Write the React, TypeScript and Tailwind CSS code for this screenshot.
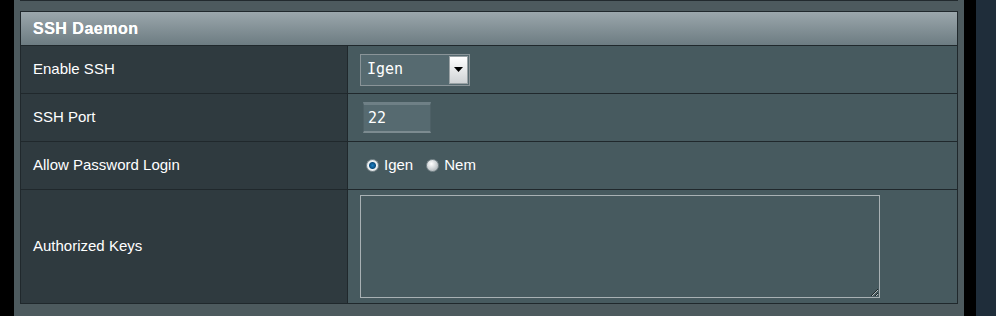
import { useState } from 'react'

const labelFont = { fontFamily: '"Liberation Sans", Arial, sans-serif' }

function Radio({ checked }: { checked: boolean }) {
  return (
    <span
      className={
        'inline-block w-[13px] h-[13px] rounded-full border border-[#7d8a8f] ' +
        (checked
          ? 'bg-[radial-gradient(circle,#1b7fc4_0,#0c4f80_3px,#f2f4f5_4px,#d5dadc_6px)]'
          : 'bg-[radial-gradient(circle_at_40%_35%,#ffffff_0,#d8dcde_4px,#b9bfc2_7px)]')
      }
    />
  )
}

export default function App() {
  const [pwLogin, setPwLogin] = useState(true)

  return (
    <div className="flex w-[996px] h-[316px] overflow-hidden" style={labelFont}>
      <div className="w-[14px] bg-black" />
      <div className="w-[950px] bg-[#4d5a5e] px-[6px]">
        <div className="h-[1px] bg-[#222a2e]" />
        <div className="mt-[10px] border border-[#20282c]">
          <div className="h-[34px] flex items-center px-[12px] bg-gradient-to-b from-[#9ba7ac] to-[#6d7c82] border-b border-[#20282c]">
            <span className="text-white font-bold text-[16px] tracking-[0.5px] [text-shadow:0_0_0.6px_#fff]">SSH Daemon</span>
          </div>

          <div className="grid grid-cols-[327px_1fr] h-[48px] border-b border-[#20282c]">
            <div className="bg-[#2f3a3f] border-r border-[#20282c] flex items-center px-[12px] text-white text-[15px]">Enable SSH</div>
            <div className="bg-[#475a5f] flex items-center px-[12px]">
              <div className="flex items-center w-[110px] h-[32px] border border-[#8a9498] bg-[#566a70]">
                <span className="flex-1 pl-[6px] text-white text-[15px]" style={{ fontFamily: '"DejaVu Sans Mono", monospace' }}>Igen</span>
                <span className="w-[19px] h-[28px] mr-[1px] bg-gradient-to-b from-white to-[#cfd3d5] border border-[#9aa2a5] flex items-center justify-center">
                  <svg width="9" height="5" viewBox="0 0 9 5"><path d="M0 0h9L4.5 5z" fill="#000" /></svg>
                </span>
              </div>
            </div>
          </div>

          <div className="grid grid-cols-[327px_1fr] h-[48px] border-b border-[#20282c]">
            <div className="bg-[#2f3a3f] border-r border-[#20282c] flex items-center px-[12px] text-white text-[15px]">SSH Port</div>
            <div className="bg-[#475a5f] flex items-center px-[15px]">
              <div className="w-[68px] h-[31px] bg-[#566a70] border-t-[3px] border-t-[#6f8086] border-b-2 border-b-[#7c8b90] border-x border-x-[#4e6066] flex items-center px-[4px] text-white text-[15px]" style={{ fontFamily: '"DejaVu Sans Mono", monospace' }}>22</div>
            </div>
          </div>

          <div className="grid grid-cols-[327px_1fr] h-[48px] border-b border-[#20282c]">
            <div className="bg-[#2f3a3f] border-r border-[#20282c] flex items-center px-[12px] text-white text-[15px]">Allow Password Login</div>
            <div className="bg-[#475a5f] flex items-center pl-[18px] text-white text-[15px] gap-[5px]">
              <span className="flex items-center gap-[5px] cursor-pointer" onClick={() => setPwLogin(true)}>
                <Radio checked={pwLogin} />
                <span>Igen</span>
              </span>
              <span className="flex items-center gap-[5px] ml-[8px] cursor-pointer" onClick={() => setPwLogin(false)}>
                <Radio checked={!pwLogin} />
                <span>Nem</span>
              </span>
            </div>
          </div>

          <div className="grid grid-cols-[327px_1fr] h-[113px]">
            <div className="bg-[#2f3a3f] border-r border-[#20282c] flex items-center px-[12px] text-white text-[15px]">Authorized Keys</div>
            <div className="bg-[#475a5f] pl-[12px] pt-[5px]">
              <textarea className="block w-[520px] h-[103px] bg-[#475a5f] border border-[#a9b1b4] outline-none text-white text-[13px] p-[2px]" />
            </div>
          </div>
        </div>
      </div>
      <div className="w-[12px] bg-black" />
      <div className="flex-1 bg-[#1f2d3a]" />
    </div>
  )
}
